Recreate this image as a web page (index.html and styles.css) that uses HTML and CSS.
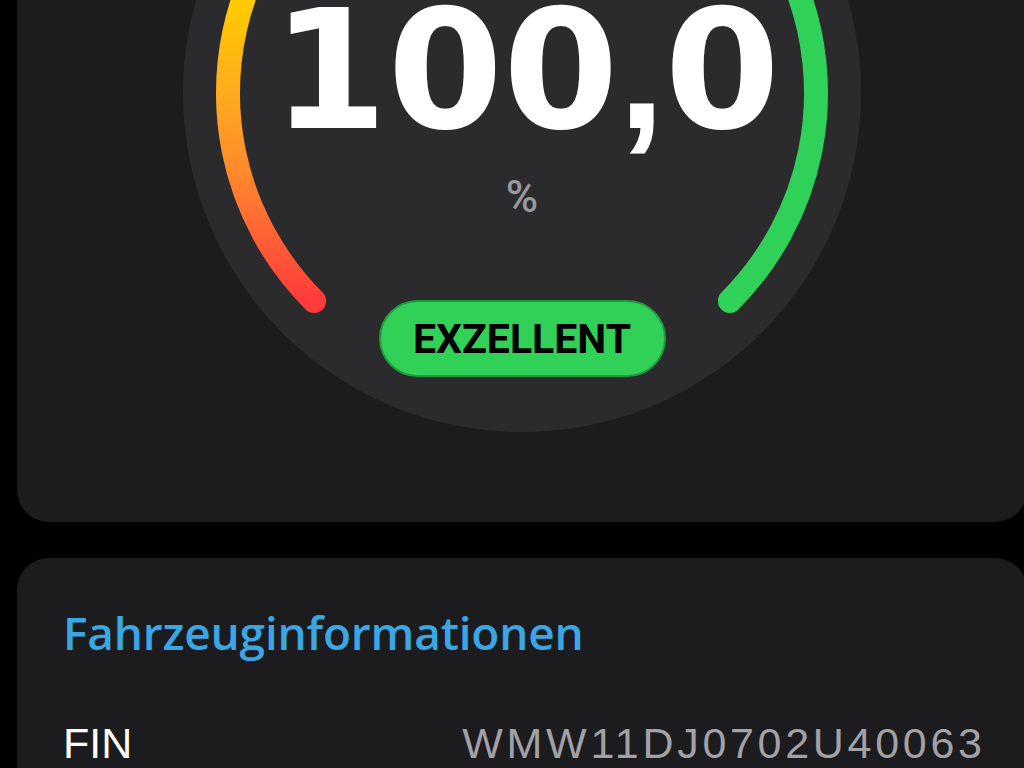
FILE: index.html
```html
<!DOCTYPE html>
<html lang="de">
<head>
    <meta charset="UTF-8">
    <meta name="viewport" content="width=device-width, initial-scale=1.0">
    <title>Batteriezustand</title>
    <link rel="stylesheet" href="styles.css">
</head>
<body>

    <div class="screen">
        <!-- Score card -->
        <div class="card score-card">
            <div class="dial">
                <svg class="dial-arc" viewBox="0 0 678 678" width="678" height="678">
                    <defs>
                        <linearGradient id="arcLeft" gradientUnits="userSpaceOnUse" x1="0" y1="547" x2="0" y2="45">
                            <stop offset="0" stop-color="#ff3b3b"/>
                            <stop offset="0.14" stop-color="#ff6535"/>
                            <stop offset="0.26" stop-color="#ff8a2c"/>
                            <stop offset="0.40" stop-color="#ffa820"/>
                            <stop offset="0.60" stop-color="#ffcc00"/>
                            <stop offset="1" stop-color="#c6d82e"/>
                        </linearGradient>
                        <linearGradient id="arcRight" gradientUnits="userSpaceOnUse" x1="0" y1="45" x2="0" y2="547">
                            <stop offset="0" stop-color="#b5d63a"/>
                            <stop offset="0.35" stop-color="#30d158"/>
                            <stop offset="1" stop-color="#30d158"/>
                        </linearGradient>
                    </defs>
                    <path d="M131.1 546.9 A294 294 0 0 1 339 45" fill="none" stroke="url(#arcLeft)" stroke-width="24" stroke-linecap="round"/>
                    <path d="M339 45 A294 294 0 0 1 546.9 546.9" fill="none" stroke="url(#arcRight)" stroke-width="24" stroke-linecap="round"/>
                </svg>
                <div class="value">100<span class="comma">,</span>0</div>
                <div class="unit">%</div>
                <div class="badge">EXZELLENT</div>
            </div>
        </div>

        <!-- Vehicle info -->
        <div class="card info-card">
            <h2>Fahrzeuginformationen</h2>
            <div class="row">
                <span class="label">FIN</span>
                <span class="data">WMW11DJ0702U40063</span>
            </div>
        </div>
    </div>

</body>
</html>
```

FILE: styles.css
```css
html, body {
    overflow: hidden;
}
body {
    margin: 0;
    background-color: #000;
    font-family: "Liberation Sans", Arial, sans-serif;
    color: #fff;
}
.screen {
    padding-left: 17px;
}
.card {
    background: #1c1c1e;
    border-radius: 32px;
    margin-right: -3px;
}
.score-card {
    margin-top: -276px;
    padding: 30px 0 90px;
}
.dial {
    position: relative;
    width: 678px;
    height: 678px;
    margin: 0 auto;
    padding-top: 252px;
    box-sizing: border-box;
    border-radius: 50%;
    background: radial-gradient(circle, #2b2b2d 88%, #323234 100%);
    display: flex;
    flex-direction: column;
    align-items: center;
}
.dial-arc {
    position: absolute;
    left: 0;
    top: 0;
}
.value {
    position: relative;
    font-family: "DejaVu Sans", sans-serif;
    font-weight: bold;
    font-size: 166px;
    line-height: 130px;
    white-space: nowrap;
    padding-left: 8px;
}
.comma {
    font-family: "Liberation Sans", sans-serif;
}
.unit {
    position: relative;
    margin-top: 39px;
    font-family: Roboto, sans-serif;
    font-weight: 500;
    font-size: 44px;
    line-height: 1;
    color: #98989e;
}
.badge {
    position: relative;
    margin-top: 81px;
    width: 287px;
    height: 77px;
    box-sizing: border-box;
    border: 2px solid #1f9a3e;
    border-radius: 39px;
    background: #31d158;
    color: #000;
    font-family: Roboto, sans-serif;
    font-weight: bold;
    font-size: 41px;
    display: flex;
    align-items: center;
    justify-content: center;
}
.info-card {
    margin-top: 36px;
    padding: 51px 45px 60px 46px;
}
.info-card h2 {
    margin: 0;
    font-family: "Open Sans", sans-serif;
    font-weight: 600;
    font-size: 46px;
    line-height: 1;
    letter-spacing: -0.2px;
    color: #3aa6e4;
}
.row {
    display: flex;
    justify-content: space-between;
    align-items: baseline;
    margin-top: 67px;
    font-size: 43px;
    line-height: 1;
}
.data {
    color: #a1a1a6;
    letter-spacing: 3.7px;
    margin-right: -3.7px;
}
```
